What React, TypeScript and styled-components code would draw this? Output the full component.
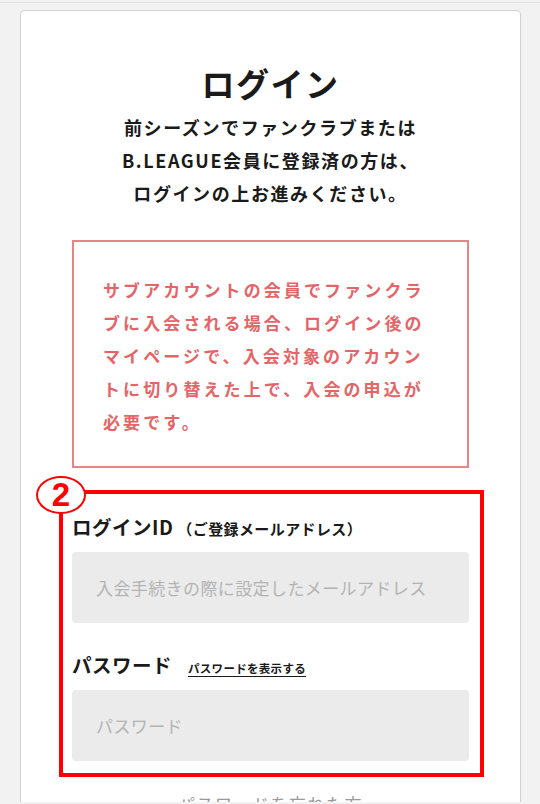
import styled, { createGlobalStyle } from 'styled-components';

const GlobalStyle = createGlobalStyle`
  html, body {
    margin: 0;
    padding: 0;
    background: #f2f2f2;
  }
  body {
    font-family: 'Noto Sans CJK JP', 'Noto Sans', sans-serif;
    color: #1a1a1a;
    overflow: hidden;
  }
`;

const Page = styled.div`
  margin-top: 2px;
  border-top: 1px solid #e2e2e2;
  padding: 7px 19px 0 20px;
  height: 800px;
  box-sizing: border-box;
`;

const Card = styled.main`
  background: #fff;
  border: 1px solid #cfd1d3;
  border-radius: 4px;
  padding: 50px 51px 40px;
  min-height: 900px;
  box-sizing: border-box;
`;

const Title = styled.h1`
  margin: 0;
  font-size: 33px;
  line-height: 44px;
  font-weight: 700;
  text-align: center;
  letter-spacing: 1.5px;
`;

const Lead = styled.p`
  margin: 6px 0 0;
  font-size: 18px;
  line-height: 33px;
  font-weight: 700;
  text-align: center;
  letter-spacing: 1.6px;
`;

const Notice = styled.div`
  margin-top: 30px;
  border: 2px solid #e68585;
  padding: 31px 28px 28px 29px;
  color: #e46468;
  font-size: 17px;
  line-height: 33px;
  font-weight: 700;
  letter-spacing: 3.1px;
`;

const Highlight = styled.section`
  position: relative;
  margin: 22px -15px 0 -13px;
  border: 4px solid #ff0000;
  padding: 19px 11px 12px 9px;
`;

const Marker = styled.span`
  position: absolute;
  left: -27px;
  top: -18px;
  width: 46px;
  height: 34px;
  border: 2px solid #ff0000;
  border-radius: 50%;
  background: #fff;
  color: #ff0000;
  font-family: 'Liberation Sans', Arial, sans-serif;
  font-weight: 700;
  font-size: 33px;
  line-height: 34px;
  text-align: center;
`;

const Label = styled.div<{ $gap?: number }>`
  display: flex;
  align-items: baseline;
  gap: 16px;
  height: 28px;
  margin-top: ${(p) => p.$gap ?? 0}px;
  font-size: 19.5px;
  line-height: 28px;
  font-weight: 700;
  letter-spacing: 0.5px;
`;

const LabelNote = styled.span`
  font-size: 15px;
  margin-left: -12px;
  letter-spacing: 0.4px;
`;

const ShowLink = styled.a`
  font-size: 11.5px;
  font-weight: 700;
  color: #1a1a1a;
  text-decoration: underline;
  text-underline-offset: 3px;
  letter-spacing: 0.3px;
`;

const Input = styled.input`
  display: block;
  width: 100%;
  box-sizing: border-box;
  height: 71px;
  margin-top: 11px;
  border: none;
  border-radius: 4px;
  background: #ebebeb;
  padding: 0 24px;
  font-family: inherit;
  font-size: 17px;
  letter-spacing: 0.4px;
  color: #333;
  outline: none;
  &::placeholder {
    color: #b3b3b3;
  }
`;

const Forgot = styled.a`
  display: block;
  margin-top: 15px;
  text-align: center;
  font-size: 17px;
  line-height: 24px;
  letter-spacing: 1.5px;
  color: #9a9a9a;
`;

export default function App() {
  return (
    <>
      <GlobalStyle />
      <Page>
        <Card>
          <Title>ログイン</Title>
          <Lead>
            前シーズンでファンクラブまたは
            <br />
            B.LEAGUE会員に登録済の方は、
            <br />
            ログインの上お進みください。
          </Lead>
          <Notice>
            サブアカウントの会員でファンクラブに入会される場合、ログイン後のマイページで、入会対象のアカウントに切り替えた上で、入会の申込が必要です。
          </Notice>
          <Highlight>
            <Marker>2</Marker>
            <Label>
              ログインID<LabelNote>（ご登録メールアドレス）</LabelNote>
            </Label>
            <Input type="email" placeholder="入会手続きの際に設定したメールアドレス" />
            <Label $gap={28}>
              パスワード<ShowLink>パスワードを表示する</ShowLink>
            </Label>
            <Input type="password" placeholder="パスワード" />
          </Highlight>
          <Forgot>パスワードを忘れた方</Forgot>
        </Card>
      </Page>
    </>
  );
}
